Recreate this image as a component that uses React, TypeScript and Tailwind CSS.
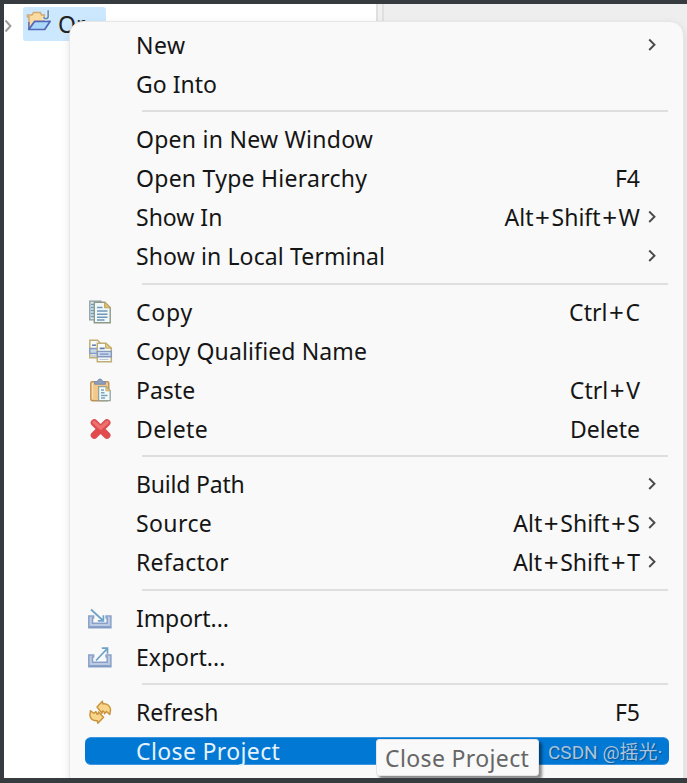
import type { ReactNode } from "react";

function CopyIcon() {
  return (
    <svg width="24" height="24" viewBox="0 0 24 24" fill="none">
      <path d="M1.8 1.2h11v18.6h-11z" fill="#dce9f1" stroke="#8a9a9c" strokeWidth="1.3" />
      <path d="M3 4.5h3M3 7.5h3M3 10.5h3M3 13.5h3M3 16.5h3" stroke="#6b9dbd" strokeWidth="1.5" />
      <path d="M6.3 2.2h10.5l5.4 5.4v15.2H6.3z" fill="#f1f8fb" stroke="#8f9a86" strokeWidth="1.4" />
      <path d="M16.6 2v5.8h5.8z" fill="#e2c070" stroke="#bfa25c" />
      <path d="M9 7.5h5.5M9 11h10.5M9 14.2h10.5M9 17.2h10.5M9 20h7.5" stroke="#6e97b8" strokeWidth="1.6" />
    </svg>
  );
}

function QualifiedIcon() {
  return (
    <svg width="25" height="24" viewBox="0 0 25 24" fill="none">
      <path d="M1.8 1.3h7.7l3.5 3.4v14.1H1.8z" fill="#f7fafb" stroke="#bfae75" strokeWidth="1.5" />
      <path d="M4 6.2h4" stroke="#6985b6" strokeWidth="1.6" />
      <path d="M1.8 9.5h8v5h-8z" fill="#c7d6ea" stroke="#8598bd" strokeWidth="1.3" />
      <path d="M3 17h5" stroke="#a7b5cb" strokeWidth="1.2" />
      <path d="M9.3 4.3h8.6l5.4 4.7v13.7h-14z" fill="#f8fbfc" stroke="#bfae75" strokeWidth="1.5" />
      <path d="M17.6 4.3V9.2h5.6z" fill="#e7cc86" stroke="#c2a864" />
      <path d="M11.7 9.4h5" stroke="#5f7db2" strokeWidth="1.7" />
      <path d="M9.3 12.4h14v5.4h-14z" fill="#c7d6ea" stroke="#8598bd" strokeWidth="1.4" />
      <path d="M12 15.1h8.5" stroke="#7c95c2" strokeWidth="1.3" />
      <path d="M11.5 20.4h9" stroke="#b6c1d2" />
    </svg>
  );
}

function PasteIcon() {
  return (
    <svg width="24" height="24" viewBox="0 0 24 24" fill="none">
      <rect x="2.8" y="3.6" width="18" height="19.2" rx="1.5" fill="#f2c98a" stroke="#bd9158" strokeWidth="1.4" />
      <path d="M4.5 5v16" stroke="#f9dfb2" strokeWidth="1.3" />
      <path d="M6.6 6.2V3.6h2.9C9.8.2 14.2.2 14.5 3.6h2.9v2.6z" fill="#8f9fc0" stroke="#7f8ba8" />
      <path d="M10.6 8.7h7.6l4 4v10H10.6z" fill="#f2fafb" stroke="#93a49d" strokeWidth="1.3" />
      <path d="M17.8 8.5v4.4h4.4z" fill="#e2c47c" stroke="#c9ab65" strokeWidth=".7" />
      <path d="M13 12h3M13 14.8h3.5M13 17.5h6.5M13 20h4" stroke="#7aa5bd" strokeWidth="1.5" />
    </svg>
  );
}

function DeleteIcon() {
  return (
    <svg width="24" height="24" viewBox="0 0 24 24" fill="none">
      <path d="M6.3 5.7 18.9 18.2M18.9 5.7 6.3 18.2" stroke="#d65055" strokeWidth="7.2" strokeLinecap="round" />
      <path d="M6.3 5.7 18.9 18.2M18.9 5.7 6.3 18.2" stroke="#e34a4e" strokeWidth="5.4" strokeLinecap="round" />
      <path d="M6 5.2 12.6 11 19.2 5.2" stroke="#ed7370" strokeWidth="3.2" strokeLinecap="round" />
    </svg>
  );
}

function TransferIcon({ outward = false }: { outward?: boolean }) {
  return (
    <svg width="24" height="24" viewBox="0 0 24 24" fill="none">
      <path d="M.8 10h4.8v2H4.5v5.2h14.7V12h-1.1v-2h4.8v11.8H.8z" fill="#bccbe2" stroke="#89a1c9" strokeWidth="1.5" />
      <path d="M1.2 21h21.3" stroke="#829bc6" strokeWidth="1.8" />
      {outward ? (
        <path d="M8 15.5 19.2 3.6M13.8 3.2h5.7v5.5" stroke="#6ea3c8" strokeWidth="1.7" />
      ) : (
        <path d="M3 3.5 15 14.5M15.4 9.2v5.6H9.8" stroke="#6ea3c8" strokeWidth="1.7" />
      )}
    </svg>
  );
}

function RefreshIcon() {
  return (
    <svg width="24" height="24" viewBox="0 0 24 24" fill="#f8d588" stroke="#c8923a" strokeWidth="1.4" strokeLinejoin="round">
      <path d="M9 7 14.4 1.2l.4 2.6c4.6-.6 7.6 2.5 7.8 6.2l-.9 4.5-3.2-3-2 2.2c-.2-2-.8-2.8-2-2.8l-.5 2.3z" />
      <path d="M15.6 17.3 9.8 23.2l-.4-2.5c-4.6.4-7.3-1.7-7.5-5.8l.6-4.2 3.2 2.6 2.3-1.7c.2 1.8.9 2.7 1.9 2.7l.5-2.4z" />
    </svg>
  );
}

function ProjectIcon() {
  return (
    <svg width="26" height="24" viewBox="0 0 26 24" fill="none">
      <path d="M3 18V6.7H1.4V5H6l1.5-2.6h6.8L15.5 5h2.8v8z" fill="#fbdca0" stroke="#d2a877" strokeWidth="1.5" />
      <path d="M2.8 19.5 8.7 11.3h15.5l-5.5 8.2z" fill="#a9d8fa" stroke="#5466b8" strokeWidth="1.7" strokeLinejoin="round" />
      <path d="M2.9 12v7.2" stroke="#5466b8" strokeWidth="1.3" />
      <path d="M22.2.2v6c0 3.3-3.6 3.3-4.7 1" stroke="#e8f4fd" strokeWidth="3.4" />
      <path d="M22.2.2v6c0 3-3.4 3.2-4.7 1" stroke="#6b90ad" strokeWidth="1.8" />
    </svg>
  );
}

function Chevron() {
  return (
    <svg width="10" height="14" viewBox="0 0 10 14" fill="none">
      <path d="m2.2 1.5 5.3 5.2-5.3 5.3" stroke="#4b4b4b" strokeWidth="1.9" />
    </svg>
  );
}

function Shortcut({ keys }: { keys: string }) {
  return (
    <span className="flex items-center">
      {keys.split("+").map((key, index) => (
        <span key={index} className="flex items-center">
          {index > 0 && <span className="mx-[1.6px] text-[26px] leading-7">+</span>}
          {key}
        </span>
      ))}
    </span>
  );
}

type Item = { label: string; tracking?: string; icon?: ReactNode; shortcut?: string; submenu?: boolean; active?: boolean };

const groups: Item[][] = [
  [{ label: "New", tracking: "tracking-[0.5px]", submenu: true }, { label: "Go Into" }],
  [
    { label: "Open in New Window", tracking: "tracking-[0.25px]" },
    { label: "Open Type Hierarchy", tracking: "tracking-[0.26px]", shortcut: "F4" },
    { label: "Show In", shortcut: "Alt+Shift+W", submenu: true },
    { label: "Show in Local Terminal", tracking: "tracking-[0.12px]", submenu: true },
  ],
  [
    { label: "Copy", tracking: "tracking-[0.8px]", icon: <CopyIcon />, shortcut: "Ctrl+C" },
    { label: "Copy Qualified Name", tracking: "tracking-[0.13px]", icon: <QualifiedIcon /> },
    { label: "Paste", icon: <PasteIcon />, shortcut: "Ctrl+V" },
    { label: "Delete", tracking: "tracking-[0.35px]", icon: <DeleteIcon />, shortcut: "Delete" },
  ],
  [
    { label: "Build Path", tracking: "tracking-[-0.2px]", submenu: true },
    { label: "Source", tracking: "tracking-[0.4px]", shortcut: "Alt+Shift+S", submenu: true },
    { label: "Refactor", tracking: "tracking-[0.27px]", shortcut: "Alt+Shift+T", submenu: true },
  ],
  [
    { label: "Import...", tracking: "tracking-[-0.1px]", icon: <TransferIcon /> },
    { label: "Export...", icon: <TransferIcon outward /> },
  ],
  [
    { label: "Refresh", icon: <RefreshIcon />, shortcut: "F5" },
    { label: "Close Project", tracking: "tracking-[0.37px]", active: true },
  ],
];

function MenuRow({ item }: { item: Item }) {
  return (
    <div className="flex h-[39px] items-center pr-[14px] pl-[15px]">
      <div
        className={
          item.active
            ? "flex h-7 flex-1 items-center rounded-md border-y border-[#3b96df] bg-[#0078d4] text-[#e6f2fb]"
            : "flex h-7 flex-1 items-center text-[#151515]"
        }
      >
        <span className="ml-[3px] w-[48px] shrink-0">{item.icon}</span>
        <span className={`flex-1 ${item.tracking ?? ""}`}>{item.label}</span>
        {item.shortcut && <Shortcut keys={item.shortcut} />}
        <span className="flex w-[29px] justify-start pl-[7px]">{item.submenu && <Chevron />}</span>
      </div>
    </div>
  );
}

export default function App() {
  return (
    <div className="relative h-[783px] w-[687px] overflow-hidden border-t-4 border-b-5 border-l-4 border-[#363b40] bg-white font-['Noto_Sans','Noto_Sans_CJK_SC',sans-serif] text-[23px] leading-7 whitespace-nowrap">
      <div className="flex h-full">
        <div className="flex w-[372px] items-start pt-[3px]">
          <svg className="mt-[12px]" width="10" height="14" viewBox="0 0 10 14" fill="none">
            <path d="m1.5 1.5 5 5.5-5 5.5" stroke="#9a9a9a" strokeWidth="1.9" />
          </svg>
          <div className="ml-[9px] flex h-[34px] w-[83px] items-center rounded-[3px] bg-[#cce8ff] pl-[3px] text-[#222]">
            <div className="-mt-1">
              <ProjectIcon />
            </div>
            <span className="ml-[6px] -mt-px">Or</span>
          </div>
        </div>
        <div className="w-2 border-x-2 border-[#e0e0e0] bg-[#f0f0f0]" />
        <div className="flex-1 bg-[#eeeeee]" />
      </div>

      <div className="absolute top-[17px] left-[65px] h-[800px] w-[615px] rounded-[14px] border border-[#e6e6e6] bg-[#f9f9f9] pt-[3px] shadow-[0_3px_9px_rgba(0,0,0,0.10)]">
        {groups.map((group, index) => (
          <div key={index}>
            {index > 0 && (
              <div className="flex h-[16.5px] items-center pr-[15px] pl-[72px]">
                <div className="h-[2px] w-full bg-[#dfdfdf]" />
              </div>
            )}
            {group.map((item) => (
              <MenuRow key={item.label} item={item} />
            ))}
          </div>
        ))}
      </div>

      <div className="absolute top-[735px] left-[372px] flex h-[37px] w-[163px] items-center rounded-[3px] border border-[#e4e4e4] bg-[#f9f9f9] pl-2 tracking-[0.37px] text-[#666] shadow-[3px_3px_3px_rgba(0,0,0,0.45)]">
        Close Project
      </div>
      <div className="absolute top-[735px] left-[544px] font-['Roboto','Noto_Sans_CJK_SC',sans-serif] text-[19px] text-[#a9c4dc] [text-shadow:1px_1px_1px_#075091]">
        CSDN @摇光·
      </div>
    </div>
  );
}
